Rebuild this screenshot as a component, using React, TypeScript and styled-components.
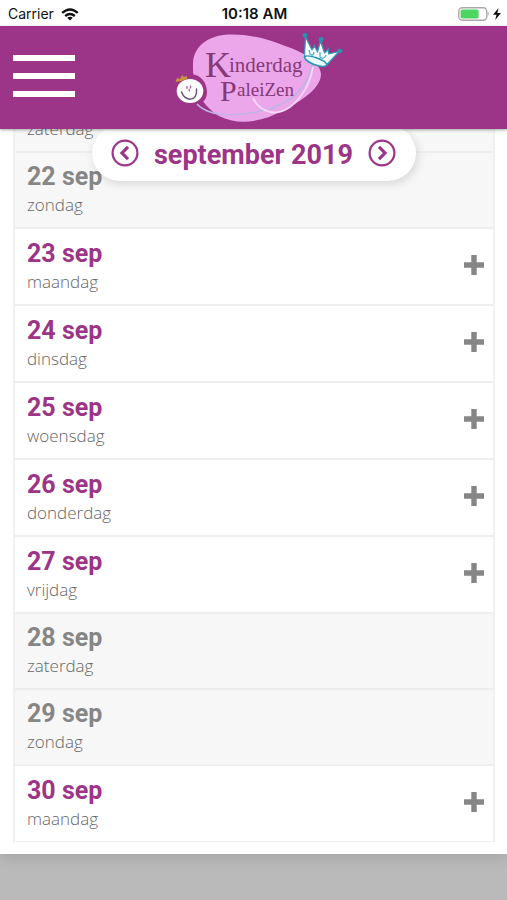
import React from "react";
import styled, { createGlobalStyle } from "styled-components";

const purple = "#9c3587";
const grey = "#868686";

const GlobalStyle = createGlobalStyle`
  * { box-sizing: border-box; }
  body { margin: 0; background: #bababa; font-family: "Open Sans", "Noto Sans", sans-serif; }
  button { border: 0; padding: 0; background: none; color: inherit; font: inherit; cursor: pointer; }
  svg { display: block; }
`;

const Screen = styled.div`
  display: flex;
  flex-direction: column;
  height: 100vh;
  overflow: hidden;
`;

const StatusBar = styled.div`
  flex: none;
  display: grid;
  grid-template-columns: 1fr auto 1fr;
  align-items: center;
  height: 26px;
  padding: 2px 6px 0 8px;
  background: #fff;
  color: #111;
  font: 400 14px/20px Inter, sans-serif;
`;

const StatusGroup = styled.div<{ $end?: boolean }>`
  display: flex;
  align-items: center;
  gap: ${(p) => (p.$end ? 4 : 7)}px;
  justify-content: ${(p) => (p.$end ? "flex-end" : "flex-start")};
`;

const Time = styled.time`
  font-size: 15px;
  font-weight: 600;
`;

const Header = styled.header`
  position: relative;
  z-index: 2;
  flex: none;
  display: grid;
  grid-template-columns: 1fr auto 1fr;
  align-items: center;
  height: 103px;
  padding: 0 13px 3px;
  background: ${purple};
  box-shadow: 0 1px 3px rgba(0, 0, 0, 0.35);
`;

const MenuButton = styled.button`
  display: flex;
  flex-direction: column;
  gap: 12px;
  width: 62px;
`;

const MenuBar = styled.span`
  height: 6px;
  width: 100%;
  background: #fff;
`;

const LogoLink = styled.a`
  display: block;
  margin-right: -10px;
`;

const Calendar = styled.main`
  position: relative;
  flex: none;
  padding: 0 12px 12px 13px;
  background: #fff;
  box-shadow: 0 4px 14px rgba(0, 0, 0, 0.12);
`;

const MonthPill = styled.nav`
  position: absolute;
  z-index: 1;
  top: -4px;
  left: 0;
  right: 0;
  width: 324px;
  max-width: 90%;
  height: 56px;
  margin: 0 auto;
  padding: 0 19px;
  display: flex;
  align-items: center;
  justify-content: space-between;
  border-radius: 28px;
  background: #fff;
  color: ${purple};
  box-shadow: 2px 3px 10px rgba(0, 0, 0, 0.13);
`;

const MonthTitle = styled.h1`
  margin: 0;
  padding-top: 3px;
  font: 700 27px/32px Roboto, sans-serif;
`;

const DayList = styled.ul`
  list-style: none;
  margin: -54px 0 0;
  padding: 0;
  border: 1px solid #f0f0f0;
  border-width: 0 2px 1px;
`;

const DayRow = styled.li<{ $weekend: boolean }>`
  display: flex;
  align-items: center;
  justify-content: space-between;
  height: ${(p) => (p.$weekend ? 76 : 77)}px;
  padding: 0 9px 0 12px;
  border-top: 2px solid #eee;
  background: ${(p) => (p.$weekend ? "#f7f7f7" : "#fff")};
`;

const DayDate = styled.div<{ $weekend: boolean }>`
  color: ${(p) => (p.$weekend ? grey : purple)};
  font: 700 25px/30px Roboto, sans-serif;
`;

const DayName = styled.div`
  color: #666;
  font: 300 17px/26px "Open Sans", sans-serif;
`;

const AddButton = styled.button`
  padding-bottom: 4px;
`;

const Wifi = () => (
  <svg width="18" height="13" viewBox="0 0 18 13" fill="none" stroke="#111" strokeWidth="2.4" aria-label="Wi-Fi">
    <path d="M1.2 4.9Q9-2 16.8 4.9" />
    <path d="M4.2 8Q9 3.9 13.8 8" />
    <path d="M9 12.6 6.2 9.8Q9 7.6 11.8 9.8Z" fill="#111" stroke="none" />
  </svg>
);

const Battery = () => (
  <svg width="32" height="14" viewBox="0 0 32 14" aria-label="Battery">
    <rect x="1.8" y="0.8" width="28" height="12.4" rx="3.6" fill="#fff" stroke="#aaa" strokeWidth="1.4" />
    <rect x="3.6" y="2.6" width="18" height="8.8" rx="1.6" fill="#4cd65f" />
    <path d="M30.8 4.8Q32.6 7 30.8 9.2Z" fill="#999" />
  </svg>
);

const Bolt = () => (
  <svg width="8" height="12" viewBox="0 0 8 12" fill="#111" aria-label="Charging">
    <path d="M5.5 0 0 6.8H3.5L2.2 12 8 4.9H4.4Z" />
  </svg>
);

const Arrow = ({ next }: { next?: boolean }) => (
  <svg width="28" height="28" viewBox="0 0 28 28" fill="none" stroke="currentColor">
    <circle cx="14" cy="14" r="12.4" strokeWidth="2.2" />
    <path d={next ? "M11 7.8 17 14 11 20.2" : "M17 7.8 11 14 17 20.2"} strokeWidth="3.2" />
  </svg>
);

const Plus = () => (
  <svg width="20" height="20" viewBox="0 0 20 20" fill={grey}>
    <path d="M7.3 0H12.7V7.3H20V12.7H12.7V20H7.3V12.7H0V7.3H7.3Z" />
  </svg>
);

const Logo = () => (
  <svg width="170" height="94" viewBox="173 29 170 94" role="img" aria-label="Kinderdag PaleiZen">
    <path
      d="M228 34.500C207 35 192 47 192 64C191 86 200 105 218 116C237 126 261 122 281 111C301 101 320 88 320 74C319 59 296 50 279 44C260 37 244 34 228 34.500Z"
      fill="#eca7ea"
    />
    <path d="M189 74C200 74 206 83 206 92C206 97 204 100 202 102L210 113Q196 109 190 103Z" fill={purple} />
    <path d="M196 104C207 116 231 117 260 111C291 104 307 88 312 63" fill="none" stroke="#bcb6e6" strokeWidth="1.600" />
    <path d="M252 98C260 114 276 116 289 107C300 99 309 84 312 67" fill="none" stroke="#f8d8f8" strokeWidth="1.700" />
    <ellipse cx="189" cy="91" rx="13.300" ry="12" fill="#fff" />
    <path d="M180.500 92C184 102 197 102 195.500 89" fill="none" stroke="#65557b" strokeWidth="1.500" strokeLinecap="round" />
    <path d="M186 86V89M189.500 85.500V88.500M188 89 188.500 91.500" fill="none" stroke="#b65ba3" strokeWidth="1.300" />
    <path d="M174.500 82 176 78 179 79 181 75 183 77 186 76 186 79 180 81Z" fill="#c9953c" />
    <g fill="#863878" fontFamily="Liberation Serif, serif">
      <text x="204" y="77" fontSize="36">K</text>
      <text x="228" y="72" fontSize="21">inderdag</text>
      <text x="219" y="101" fontSize="30">P</text>
      <text x="236" y="96" fontSize="19">aleiZen</text>
    </g>
    <path
      d="M303.500 57 304.500 37 311 50 313.500 46 316.500 52 319.500 41 323.500 53 327 49.500 327.500 54 338 51.500 325.500 65Q313 67 303.500 57Z"
      fill="#fff"
      stroke="#2f9dba"
      strokeWidth="1.200"
      strokeLinejoin="round"
    />
    <path d="M303.500 57C306 53.500 325 60 326 65C322 69 305 63 303.500 57Z" fill="#eafaff" stroke="#2495b5" strokeWidth="1.500" />
    <path d="M308 50 309 54Q312 57 313 52M319 52 319 57Q323 60 325 55" fill="none" stroke="#4bb2cc" strokeWidth="1.300" />
    <g fill="#2596ac">
      <circle cx="304" cy="35.500" r="2.400" />
      <circle cx="320" cy="39.500" r="2.400" />
      <circle cx="339" cy="51" r="2.300" />
      <circle cx="313" cy="45.500" r="1" />
      <circle cx="327.500" cy="48.500" r="1" />
    </g>
  </svg>
);

const names = ["zondag", "maandag", "dinsdag", "woensdag", "donderdag", "vrijdag", "zaterdag"];
const days = Array.from({ length: 10 }, (_, i) => {
  const weekday = (i + 6) % 7;
  return { date: 21 + i, name: names[weekday], weekend: weekday === 0 || weekday === 6 };
});

export default function App() {
  return (
    <>
      <GlobalStyle />
      <Screen>
        <StatusBar>
          <StatusGroup>
            <span>Carrier</span>
            <Wifi />
          </StatusGroup>
          <Time>10:18 AM</Time>
          <StatusGroup $end>
            <Battery />
            <Bolt />
          </StatusGroup>
        </StatusBar>
        <Header>
          <MenuButton aria-label="Menu">
            <MenuBar />
            <MenuBar />
            <MenuBar />
          </MenuButton>
          <LogoLink href="#">
            <Logo />
          </LogoLink>
        </Header>
        <Calendar>
          <MonthPill>
            <button aria-label="Vorige maand"><Arrow /></button>
            <MonthTitle>september 2019</MonthTitle>
            <button aria-label="Volgende maand"><Arrow next /></button>
          </MonthPill>
          <DayList>
            {days.map((day) => (
              <DayRow key={day.date} $weekend={day.weekend}>
                <div>
                  <DayDate $weekend={day.weekend}>{day.date} sep</DayDate>
                  <DayName>{day.name}</DayName>
                </div>
                {!day.weekend && (
                  <AddButton aria-label={`${day.date} september toevoegen`}><Plus /></AddButton>
                )}
              </DayRow>
            ))}
          </DayList>
        </Calendar>
      </Screen>
    </>
  );
}
